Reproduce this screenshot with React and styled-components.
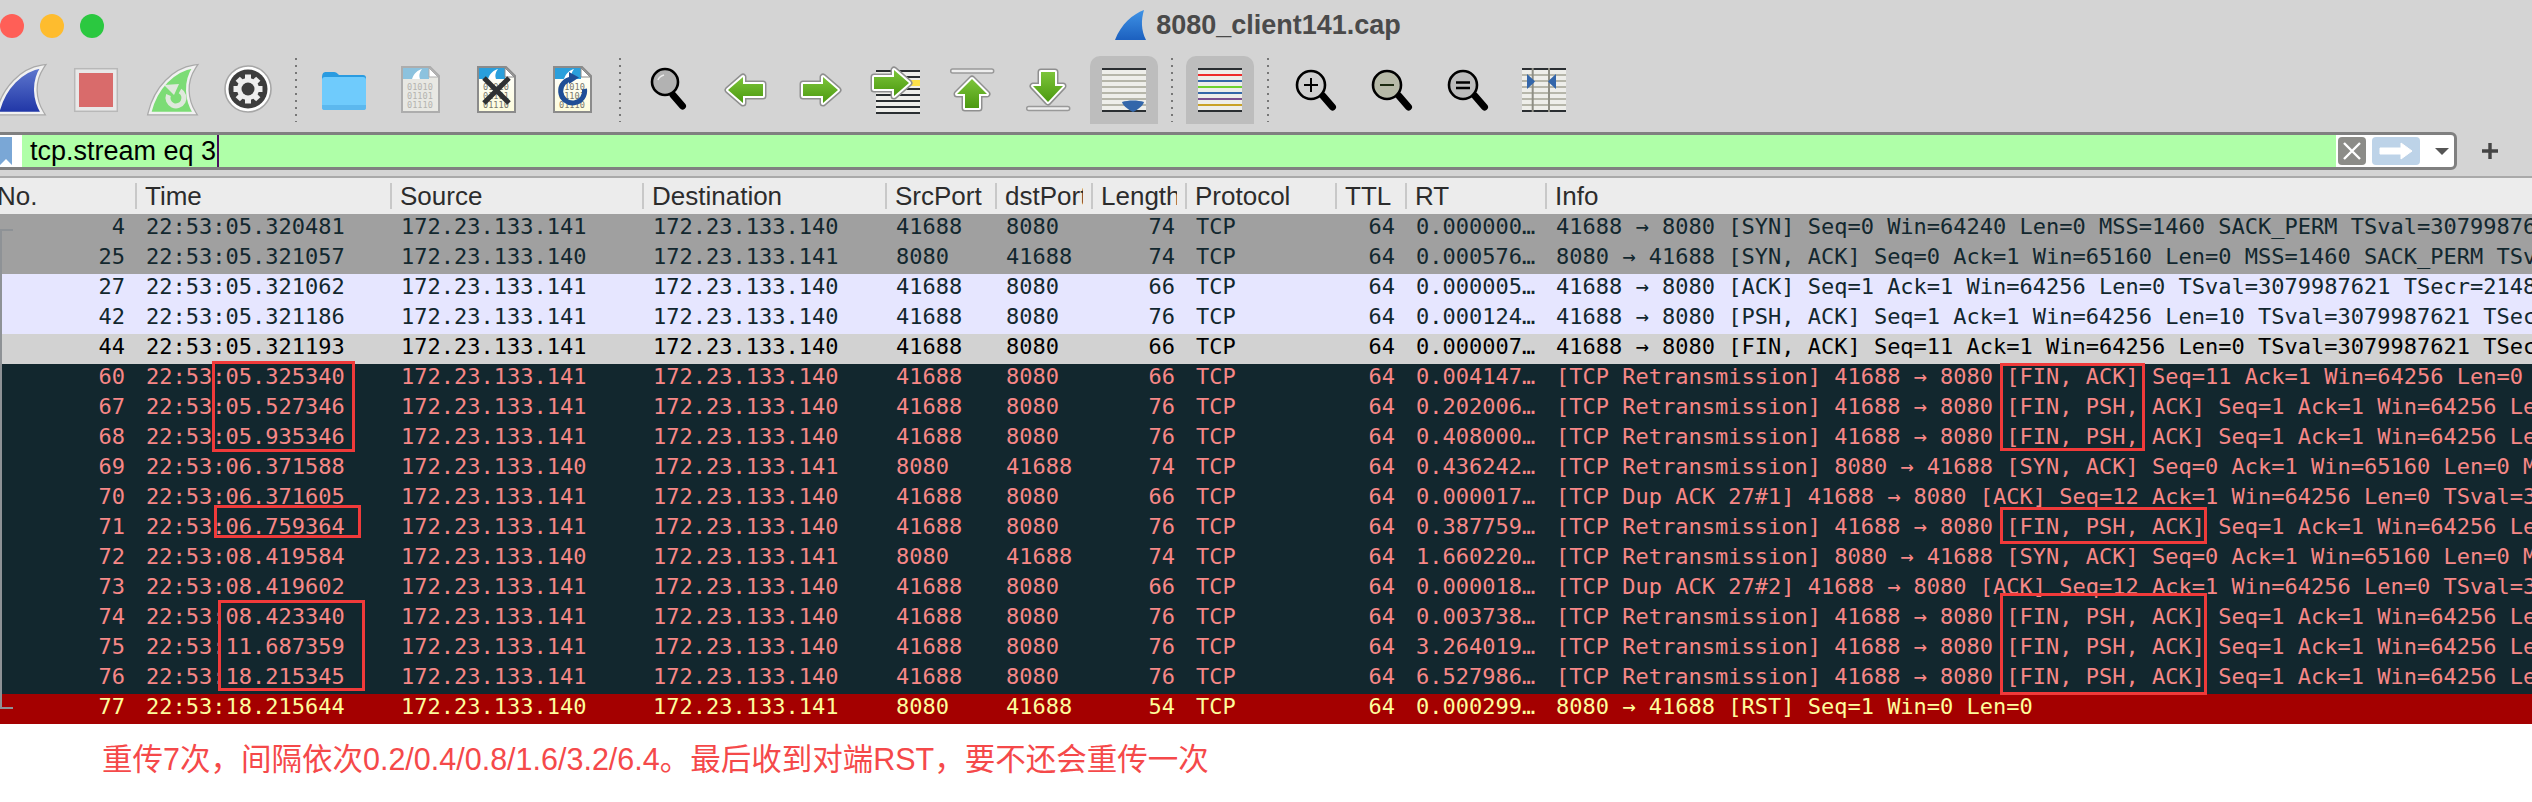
import React from 'react';
import styled, { createGlobalStyle } from 'styled-components';

const MONO = '"DejaVu Sans Mono", "Liberation Mono", monospace';
const SANS = '"Liberation Sans", Arial, sans-serif';
const COLS = '135px 255px 252px 243px 110px 96px 94px 150px 70px 140px 1fr';

const rowColors = {
  syn: { bg: '#a0a0a0', fg: '#12272e' },
  tcp: { bg: '#e6e6ff', fg: '#12272e' },
  fin: { bg: '#d2d2d2', fg: '#000000' },
  bad: { bg: '#12272e', fg: '#f78787' },
  rst: { bg: '#a40000', fg: '#fffc9c' },
};

const A = '172.23.133.141';
const B = '172.23.133.140';
const RE = '[TCP Retransmission]';
const FPA = '41688 → 8080 [FIN, PSH, ACK] Seq=1 Ack=1 Win=64256 Len=10 TSval=3079987621';

const packets = [
  ['syn', '4', '22:53:05.320481', A, B, '41688', '8080', '74', '0.000000…', '41688 → 8080 [SYN] Seq=0 Win=64240 Len=0 MSS=1460 SACK_PERM TSval=3079987620 TSecr=0 WS=128'],
  ['syn', '25', '22:53:05.321057', B, A, '8080', '41688', '74', '0.000576…', '8080 → 41688 [SYN, ACK] Seq=0 Ack=1 Win=65160 Len=0 MSS=1460 SACK_PERM TSval=2148301 TSecr=3079987620'],
  ['tcp', '27', '22:53:05.321062', A, B, '41688', '8080', '66', '0.000005…', '41688 → 8080 [ACK] Seq=1 Ack=1 Win=64256 Len=0 TSval=3079987621 TSecr=2148301'],
  ['tcp', '42', '22:53:05.321186', A, B, '41688', '8080', '76', '0.000124…', '41688 → 8080 [PSH, ACK] Seq=1 Ack=1 Win=64256 Len=10 TSval=3079987621 TSecr=2148301'],
  ['fin', '44', '22:53:05.321193', A, B, '41688', '8080', '66', '0.000007…', '41688 → 8080 [FIN, ACK] Seq=11 Ack=1 Win=64256 Len=0 TSval=3079987621 TSecr=2148301'],
  ['bad', '60', '22:53:05.325340', A, B, '41688', '8080', '66', '0.004147…', `${RE} 41688 → 8080 [FIN, ACK] Seq=11 Ack=1 Win=64256 Len=0 TSval=3079987625`],
  ['bad', '67', '22:53:05.527346', A, B, '41688', '8080', '76', '0.202006…', `${RE} ${FPA}`],
  ['bad', '68', '22:53:05.935346', A, B, '41688', '8080', '76', '0.408000…', `${RE} ${FPA}`],
  ['bad', '69', '22:53:06.371588', B, A, '8080', '41688', '74', '0.436242…', `${RE} 8080 → 41688 [SYN, ACK] Seq=0 Ack=1 Win=65160 Len=0 MSS=1460 SACK_PERM`],
  ['bad', '70', '22:53:06.371605', A, B, '41688', '8080', '66', '0.000017…', '[TCP Dup ACK 27#1] 41688 → 8080 [ACK] Seq=12 Ack=1 Win=64256 Len=0 TSval=3079988671'],
  ['bad', '71', '22:53:06.759364', A, B, '41688', '8080', '76', '0.387759…', `${RE} ${FPA}`],
  ['bad', '72', '22:53:08.419584', B, A, '8080', '41688', '74', '1.660220…', `${RE} 8080 → 41688 [SYN, ACK] Seq=0 Ack=1 Win=65160 Len=0 MSS=1460 SACK_PERM`],
  ['bad', '73', '22:53:08.419602', A, B, '41688', '8080', '66', '0.000018…', '[TCP Dup ACK 27#2] 41688 → 8080 [ACK] Seq=12 Ack=1 Win=64256 Len=0 TSval=3079990719'],
  ['bad', '74', '22:53:08.423340', A, B, '41688', '8080', '76', '0.003738…', `${RE} ${FPA}`],
  ['bad', '75', '22:53:11.687359', A, B, '41688', '8080', '76', '3.264019…', `${RE} ${FPA}`],
  ['bad', '76', '22:53:18.215345', A, B, '41688', '8080', '76', '6.527986…', `${RE} ${FPA}`],
  ['rst', '77', '22:53:18.215644', B, A, '8080', '41688', '54', '0.000299…', '8080 → 41688 [RST] Seq=1 Win=0 Len=0'],
];

const headers = ['No.', 'Time', 'Source', 'Destination', 'SrcPort', 'dstPort', 'Length', 'Protocol', 'TTL', 'RT', 'Info'];

const markers = [
  { x: 212, y: 361, w: 143, h: 91 },
  { x: 214, y: 505, w: 147, h: 33 },
  { x: 218, y: 600, w: 147, h: 91 },
  { x: 2000, y: 363, w: 145, h: 88 },
  { x: 2000, y: 507, w: 207, h: 37 },
  { x: 2000, y: 593, w: 207, h: 102 },
];

const FIN = 'M56 11C36 14 18 32 12 57H56C48 44 46 26 56 11Z';
const LEFT = 'M18 34L33 21V28H53V40H33V47Z';
const RIGHT = 'M52 34L37 21V28H17V40H37V47Z';
const UP = 'M34 23L49 38H41V52H27V38H19Z';
const DOWN = 'M27 16H41V30H49L34 46L19 30H27Z';

function Icon({ children }) {
  return <IconSvg viewBox="0 0 68 68">{children}</IconSvg>;
}

function GreenArrow({ d, offset }) {
  return (
    <g transform={offset}>
      <path d={d} fill="#8f8f8f" stroke="#8f8f8f" strokeWidth="7" strokeLinejoin="round" />
      <path d={d} fill="#fff" stroke="#fff" strokeWidth="4" strokeLinejoin="round" />
      <path d={d} fill="url(#arrowGreen)" />
    </g>
  );
}

function Fin({ fill }) {
  return (
    <>
      <path d={FIN} fill="none" stroke="#a9a9a9" strokeWidth="5" />
      <path d={FIN} fill={fill} stroke="#f1f1f1" strokeWidth="2.5" />
    </>
  );
}

function Gear() {
  const teeth = [0, 45, 90, 135, 180, 225, 270, 315];
  return (
    <Icon>
      <circle cx="34" cy="33" r="23" fill="#fff" stroke="#a6a6a6" strokeWidth="1.6" />
      <circle cx="34" cy="33" r="19.5" fill="#3d3d3d" />
      {teeth.map((a) => (
        <rect key={a} x="31" y="18.5" width="6" height="6" fill="#eee" transform={`rotate(${a} 34 33)`} />
      ))}
      <circle cx="34" cy="33" r="11" fill="#eee" />
      <circle cx="34" cy="33" r="6.5" fill="#3d3d3d" />
    </Icon>
  );
}

function CapFile({ dim, children }) {
  const edge = dim ? '#adadad' : '#8b8b8b';
  const head = dim ? '#8cc2de' : '#2a9fdc';
  const body = dim ? '#e8e8e3' : 'url(#paper)';
  const digits = dim ? '#b4b4b0' : '#77776c';
  return (
    <Icon>
      <path d="M16 11H44L53 20V56H16Z" fill={body} stroke={edge} strokeWidth="2" />
      <path d="M17 12H43V23H17Z" fill={head} />
      <path d="M43 12L52 21H43Z" fill="#fff" stroke={edge} strokeWidth="1" />
      <path d="M26 23C28 17 32 14 36 13C33 17 33 20 34 23Z" fill="#fff" />
      <BinaryText x="21" y="34" fill={digits}>01010</BinaryText>
      <BinaryText x="21" y="43" fill={digits}>01101</BinaryText>
      <BinaryText x="21" y="52" fill={digits}>01110</BinaryText>
      {children}
    </Icon>
  );
}

function Lens({ cx, cy, r, fill, hx, hy }) {
  return (
    <>
      <path d={`M${hx} ${hy}L${hx + 9.5} ${hy + 11}`} stroke="#000" strokeWidth="7" strokeLinecap="round" />
      <circle cx={cx} cy={cy} r={r} fill={fill} stroke="#000" strokeWidth="2.6" />
    </>
  );
}

function Lines({ rows }) {
  return (
    <>
      <rect x="12" y="12" width="44" height="44" fill="#eeeeea" />
      {rows.map(([y, color]) => (
        <rect key={y} x="12" y={y} width="44" height="2" fill={color} />
      ))}
    </>
  );
}

const DARK = '#2a2e31';
const GREY = '#b6b6aa';
const dimRows = [[12, DARK], [18, GREY], [24, GREY], [30, GREY], [36, GREY], [42, GREY], [48, GREY], [54, DARK]];

function Toolbar() {
  return (
    <ToolRow>
      <ToolBtn>
        <Icon><Fin fill="url(#finBlue)" /></Icon>
      </ToolBtn>
      <ToolBtn>
        <Icon>
          <rect x="12.7" y="12.7" width="42.6" height="42.6" fill="#e8e8e8" stroke="#b8b8b8" strokeWidth="1.5" />
          <rect x="17" y="17" width="34" height="34" fill="#d96b6b" />
        </Icon>
      </ToolBtn>
      <ToolBtn>
        <Icon>
          <Fin fill="#7cdc75" />
          <path d="M30.500 39A8 8 0 1 0 42 35" fill="none" stroke="#dfe8dc" strokeWidth="5" />
          <path d="M26 29L41 28L36 39Z" fill="#dfe8dc" />
        </Icon>
      </ToolBtn>
      <ToolBtn><Gear /></ToolBtn>
      <ToolSep />
      <ToolBtn>
        <Icon>
          <path d="M12 22C12 18 13 16 16 16H24C26 16 27 17 29 19H53C55 19 56 20 56 22V50C56 53 55 54 53 54H15C13 54 12 53 12 50Z" fill="#2a9be0" />
          <path d="M12 24C12 22 13 21 15 21H53C55 21 56 22 56 24V50C56 53 55 54 53 54H15C13 54 12 53 12 50Z" fill="#6fcbfc" />
          <path d="M12 49H56V50C56 53 55 54 53 54H15C13 54 12 53 12 50Z" fill="#5cb8ee" />
        </Icon>
      </ToolBtn>
      <ToolBtn><CapFile dim /></ToolBtn>
      <ToolBtn>
        <CapFile>
          <path d="M22 22L47 47M47 22L22 47" stroke="#2f3133" strokeWidth="5" />
        </CapFile>
      </ToolBtn>
      <ToolBtn>
        <CapFile>
          <path d="M34 23A12 12 0 1 0 46.500 33" fill="none" stroke="#1f4e96" strokeWidth="5" />
          <path d="M31 16L41 21.500L31 28Z" fill="#1f4e96" />
        </CapFile>
      </ToolBtn>
      <ToolSep />
      <ToolBtn>
        <Icon>
          <Lens cx={31} cy={26} r={13} fill="#b2b2b2" hx={39} hy={39} />
          <path d="M24 24C25 21 27 20 30 19" fill="none" stroke="#ececec" strokeWidth="1.6" />
        </Icon>
      </ToolBtn>
      <ToolBtn><Icon><GreenArrow d={LEFT} /></Icon></ToolBtn>
      <ToolBtn><Icon><GreenArrow d={RIGHT} /></Icon></ToolBtn>
      <ToolBtn>
        <Icon>
          <rect x="14" y="14" width="44" height="44" fill="#eeeeea" />
          {[14, 20, 32, 38, 44, 50, 56].map((y) => (
            <rect key={y} x="14" y={y} width="44" height="2" fill={DARK} />
          ))}
          <rect x="46" y="24" width="12" height="6" fill="#fce14a" />
          <GreenArrow d={RIGHT} offset="translate(-5 -7)" />
        </Icon>
      </ToolBtn>
      <ToolBtn>
        <Icon>
          <rect x="12.7" y="13" width="43" height="4" rx="2" fill="#eee" stroke="#999" strokeWidth="1.5" />
          <GreenArrow d={UP} />
        </Icon>
      </ToolBtn>
      <ToolBtn>
        <Icon>
          <GreenArrow d={DOWN} />
          <rect x="12.7" y="50.5" width="43" height="4" rx="2" fill="#eee" stroke="#999" strokeWidth="1.5" />
        </Icon>
      </ToolBtn>
      <ToolBtn $active>
        <Icon>
          <Lines rows={dimRows} />
          <path d="M32 46C38 44 48 44 54 46C53 50 47 54 43 56C39 54 33 50 32 46Z" fill="#3366aa" />
        </Icon>
      </ToolBtn>
      <ToolSep />
      <ToolBtn $active>
        <Icon>
          <Lines rows={[[12, DARK], [18, '#ee2b2b'], [24, '#3467a8'], [30, '#6ed22e'], [36, '#3467a8'], [42, '#7a4f8e'], [48, '#c9a227'], [54, DARK]]} />
        </Icon>
      </ToolBtn>
      <ToolSep />
      <ToolBtn>
        <Icon>
          <Lens cx={29} cy={29} r={14} fill="#cfcfcf" hx={41} hy={40} />
          <path d="M22 29H36M29 22V36" stroke="#000" strokeWidth="2" />
        </Icon>
      </ToolBtn>
      <ToolBtn>
        <Icon>
          <Lens cx={29} cy={29} r={14} fill="#b7baa8" hx={41} hy={40} />
          <path d="M22 29H36" stroke="#1c2a10" strokeWidth="2" />
        </Icon>
      </ToolBtn>
      <ToolBtn>
        <Icon>
          <Lens cx={29} cy={29} r={14} fill="#bdbdbd" hx={41} hy={40} />
          <path d="M22 26.5H36M22 32H36" stroke="#000" strokeWidth="2.4" />
        </Icon>
      </ToolBtn>
      <ToolBtn>
        <Icon>
          <Lines rows={dimRows} />
          <path d="M22.7 12V56M39 12V56" stroke="#8f8f85" strokeWidth="2" />
          <path d="M17 18C20 21 23 23 25 25.500C23 28 20 30 17 33Z" fill="#3366aa" />
          <path d="M46 18C43 21 40 23 38 25.500C40 28 43 30 46 33Z" fill="#3366aa" />
        </Icon>
      </ToolBtn>
    </ToolRow>
  );
}

export default function App() {
  return (
    <Root>
      <GlobalStyle />
      <SvgDefs>
        <defs>
          <linearGradient id="finBlue" x1="0" y1="0" x2="0" y2="1">
            <stop offset="0" stopColor="#6079cf" />
            <stop offset="1" stopColor="#1f35a6" />
          </linearGradient>
          <linearGradient id="titleFin" x1="0" y1="0" x2="0" y2="1">
            <stop offset="0" stopColor="#3f93e6" />
            <stop offset="1" stopColor="#1c60bf" />
          </linearGradient>
          <linearGradient id="arrowGreen" x1="0" y1="0" x2="0" y2="1">
            <stop offset="0" stopColor="#7cc43a" />
            <stop offset="1" stopColor="#4c9a10" />
          </linearGradient>
          <linearGradient id="paper" x1="0" y1="0" x2="0" y2="1">
            <stop offset="0" stopColor="#ffffff" />
            <stop offset="1" stopColor="#fdfcdc" />
          </linearGradient>
        </defs>
      </SvgDefs>

      <TitleBar>
        <Lights>
          <Light $color="#ff5f57" />
          <Light $color="#febc2e" />
          <Light $color="#2bc840" />
        </Lights>
        <Title>
          <TitleFin viewBox="0 0 31 30">
            <path d="M29 0C18 4 6 14 0 30H31C26 20 26 10 29 0Z" fill="url(#titleFin)" />
          </TitleFin>
          8080_client141.cap
        </Title>
      </TitleBar>

      <Toolbar />

      <FilterRow>
        <FilterBox>
          <Bookmark>
            <svg width="12" height="28" viewBox="0 0 12 28">
              <path d="M0 0H12V28L6 22L0 28Z" fill="#7aa7d6" />
            </svg>
          </Bookmark>
          <FilterInput>tcp.stream eq 3<Caret /></FilterInput>
          <ClearBtn>
            <svg width="20" height="20" viewBox="0 0 20 20">
              <path d="M2 2L18 18M18 2L2 18" stroke="#fff" strokeWidth="2.4" />
            </svg>
          </ClearBtn>
          <ApplyBtn>
            <svg width="34" height="18" viewBox="0 0 34 18">
              <path d="M1 6H22V1L33 9L22 17V12H1Z" fill="#fff" stroke="#fff" strokeWidth="1" strokeLinejoin="round" />
            </svg>
          </ApplyBtn>
          <DropArrow />
        </FilterBox>
        <PlusBtn>
          <svg width="16" height="16" viewBox="0 0 16 16">
            <path d="M8 0V16M0 8H16" stroke="#444" strokeWidth="3.4" />
          </svg>
        </PlusBtn>
      </FilterRow>

      <HeaderRow>
        {headers.map((h) => (
          <HeaderCell key={h}>
            <HeaderLabel $nudge={h === 'No.'}>{h}</HeaderLabel>
          </HeaderCell>
        ))}
      </HeaderRow>

      <div>
        {packets.map(([kind, no, time, src, dst, sport, dport, len, rt, info]) => (
          <Row key={no} $kind={kind}>
            <Cell $right>{no}</Cell>
            <Cell>{time}</Cell>
            <Cell>{src}</Cell>
            <Cell>{dst}</Cell>
            <Cell>{sport}</Cell>
            <Cell>{dport}</Cell>
            <Cell $right>{len}</Cell>
            <Cell>TCP</Cell>
            <Cell $right>64</Cell>
            <Cell>{rt}</Cell>
            <Cell>{info}</Cell>
          </Row>
        ))}
      </div>

      <Note>重传7次，间隔依次0.2/0.4/0.8/1.6/3.2/6.4。最后收到对端RST，要不还会重传一次</Note>

      <ConvLine />
      {markers.map((m) => (
        <Marker key={`${m.x}-${m.y}`} $x={m.x} $y={m.y} $w={m.w} $h={m.h} />
      ))}
    </Root>
  );
}

const GlobalStyle = createGlobalStyle`
  html, body {
    margin: 0;
    padding: 0;
    background: #fff;
  }
`
const Root = styled.div`
  position: relative;
  width: 2532px;
  height: 802px;
  overflow: hidden;
  background: #fff;
  font-family: ${SANS};
`
const SvgDefs = styled.svg`
  position: absolute;
  width: 0;
  height: 0;
`
const TitleBar = styled.div`
  display: grid;
  grid-template-columns: 1fr auto 1fr;
  align-items: center;
  height: 50px;
  padding: 2px 16px 0 0;
  box-sizing: border-box;
  background: #d4d4d4;
`
const Lights = styled.div`
  display: flex;
  gap: 16px;
`
const Light = styled.span`
  width: 24px;
  height: 24px;
  border-radius: 50%;
  background: ${(p) => p.$color};
`
const Title = styled.div`
  display: flex;
  align-items: center;
  gap: 10px;
  margin-top: -2px;
  font-size: 27px;
  font-weight: 700;
  color: #4a4a4a;
`
const TitleFin = styled.svg`
  width: 31px;
  height: 30px;
`
const ToolRow = styled.div`
  display: flex;
  gap: 8px;
  height: 83px;
  padding: 6px 0 9px;
  margin-left: -14px;
  box-sizing: border-box;
  background: #d4d4d4;
`
const ToolBtn = styled.div`
  flex: none;
  width: 68px;
  height: 68px;
  border-radius: 10px 10px 0 0;
  background: ${(p) => (p.$active ? '#bdbdbd' : 'transparent')};
`
const ToolSep = styled.div`
  flex: none;
  width: 12px;
  height: 64px;
  margin-top: 2px;
  background: repeating-linear-gradient(#777 0 2px, transparent 2px 7px) center / 2px 100% no-repeat;
`
const IconSvg = styled.svg`
  display: block;
  width: 68px;
  height: 68px;
  overflow: visible;
`
const BinaryText = styled.text`
  font-family: ${MONO};
  font-size: 8.6px;
  letter-spacing: 0;
`
const FilterRow = styled.div`
  display: flex;
  align-items: center;
  height: 45px;
  padding-bottom: 7px;
  box-sizing: border-box;
  background: #d4d4d4;
  border-bottom: 2px solid #a9a9a9;
`
const FilterBox = styled.div`
  display: flex;
  align-items: center;
  width: 2463px;
  height: 38px;
  margin-left: -6px;
  box-sizing: border-box;
  border: 3px solid #808080;
  border-radius: 0 6px 6px 0;
  background: #fff;
`
const Bookmark = styled.div`
  display: flex;
  align-items: center;
  width: 25px;
  padding-left: 3px;
  box-sizing: border-box;
`
const FilterInput = styled.div`
  display: flex;
  align-items: center;
  width: 2314px;
  height: 32px;
  padding-left: 8px;
  box-sizing: border-box;
  background: #afffa8;
  font-size: 27px;
  color: #000;
`
const Caret = styled.span`
  width: 2px;
  height: 32px;
  margin-left: 1px;
  background: #4b1060;
`
const ClearBtn = styled.div`
  display: flex;
  align-items: center;
  justify-content: center;
  width: 28px;
  height: 28px;
  margin-left: 2px;
  border-radius: 4px;
  background: #8c8c88;
`
const ApplyBtn = styled.div`
  display: flex;
  align-items: center;
  justify-content: center;
  width: 48px;
  height: 28px;
  margin-left: 6px;
  border-radius: 4px;
  background: #bdd3e8;
`
const DropArrow = styled.span`
  width: 0;
  height: 0;
  margin-left: 15px;
  border-left: 7px solid transparent;
  border-right: 7px solid transparent;
  border-top: 7px solid #555;
`
const PlusBtn = styled.div`
  display: flex;
  margin-left: 25px;
`
const HeaderRow = styled.div`
  display: grid;
  grid-template-columns: ${COLS};
  align-items: center;
  height: 36px;
  background: #ececec;
  font-size: 26px;
  color: #2c2c2c;
`
const HeaderCell = styled.div`
  min-width: 0;
  height: 26px;
  padding-left: 8px;
  display: flex;
  align-items: center;
  border-left: 2px solid #c8c8c8;
  &:first-child {
    border-left: none;
    padding-left: 0;
  }
`
const HeaderLabel = styled.span`
  overflow: hidden;
  white-space: nowrap;
  margin-right: 8px;
  margin-left: ${(p) => (p.$nudge ? '-3px' : '0')};
`
const Row = styled.div`
  display: grid;
  grid-template-columns: ${COLS};
  height: 30px;
  background: ${(p) => rowColors[p.$kind].bg};
  color: ${(p) => rowColors[p.$kind].fg};
  font-family: ${MONO};
  font-size: 22px;
  line-height: 25px;
`
const Cell = styled.div`
  min-width: 0;
  padding: ${(p) => (p.$right ? '0 10px 0 0' : '0 0 0 11px')};
  text-align: ${(p) => (p.$right ? 'right' : 'left')};
  white-space: pre;
  overflow: hidden;
`
const Note = styled.div`
  padding: 17px 0 0 102px;
  font-family: ${SANS}, "Noto Sans CJK SC", sans-serif;
  font-size: 30.5px;
  line-height: 36px;
  color: #f5494a;
`
const ConvLine = styled.div`
  position: absolute;
  left: 0;
  top: 229px;
  width: 13px;
  height: 480px;
  box-sizing: border-box;
  border: solid #8e9296;
  border-width: 2px 0 2px 2px;
`
const Marker = styled.div`
  position: absolute;
  left: ${(p) => p.$x}px;
  top: ${(p) => p.$y}px;
  width: ${(p) => p.$w}px;
  height: ${(p) => p.$h}px;
  box-sizing: border-box;
  border: 3px solid #f03a3a;
`
